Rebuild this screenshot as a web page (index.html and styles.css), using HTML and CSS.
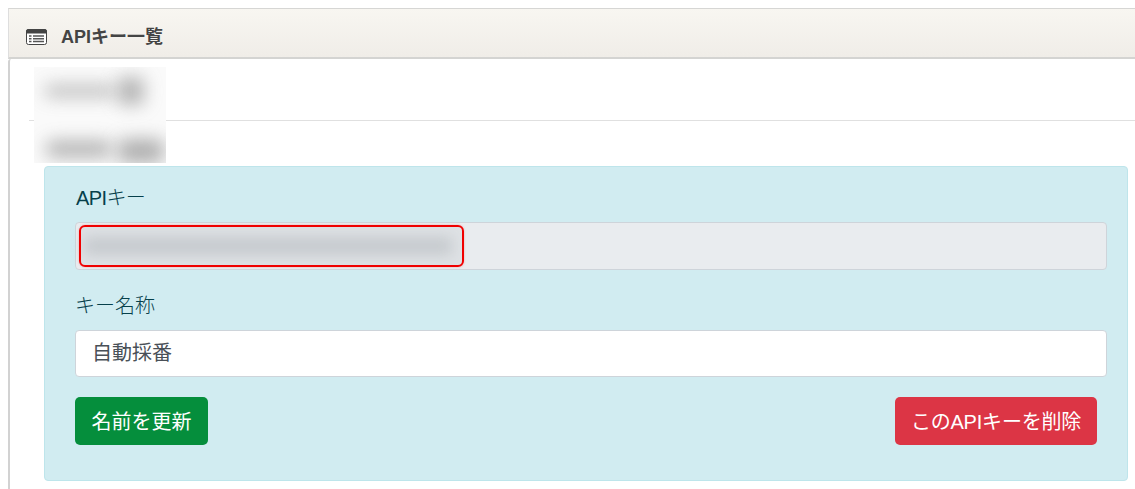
FILE: index.html
```html
<!DOCTYPE html>
<html lang="ja">
<head>
<meta charset="utf-8">
<title>APIキー一覧</title>
<link rel="stylesheet" href="styles.css">
</head>
<body>
<section class="panel">
  <header class="panel-head">
    <svg class="head-icon" width="21" height="16" viewBox="0 0 21 16" aria-hidden="true">
      <rect x="0.5" y="0.5" width="20" height="15" rx="2" fill="#fff" stroke="#444"/>
      <path d="M0 2.5a2.5 2.5 0 0 1 2.5-2.5h16a2.5 2.5 0 0 1 2.5 2.5v2h-21z" fill="#444"/>
      <path d="M3 7h2.5M7 7h11M3 9.75h2.5M7 9.75h11M3 12.5h2.5M7 12.5h11" stroke="#555" stroke-width="1.4"/>
    </svg>
    <h1 class="head-title">APIキー一覧</h1>
  </header>
  <div class="panel-body">
    <div class="masked" aria-hidden="true">
      <span class="smear smear-a"></span><span class="smear smear-b"></span>
      <span class="smear smear-c"></span><span class="smear smear-d"></span>
    </div>
    <div class="row-line"></div>
    <div class="alert">
      <div class="field">
        <label class="label label-key">APIキー</label>
        <div class="input input-readonly">
          <span class="key-smear"></span>
          <span class="key-mark"></span>
        </div>
      </div>
      <div class="field">
        <label class="label">キー名称</label>
        <div class="input input-name">自動採番</div>
      </div>
      <div class="actions">
        <button class="btn btn-green">名前を更新</button>
        <button class="btn btn-red">このAPIキーを削除</button>
      </div>
    </div>
  </div>
</section>
</body>
</html>
```
FILE: styles.css
```css
* { box-sizing: border-box; }
html, body { height: 100%; overflow: hidden; }
body {
  margin: 0;
  padding: 8px 0 0 8px;
  background: #fff;
  color: #212529;
  font-family: "Liberation Sans", "Noto Sans CJK JP", sans-serif;
}
.panel { height: 100%; display: flex; flex-direction: column; }
.panel-head {
  height: 51px;
  display: flex;
  align-items: center;
  padding: 8px 0 0 17px;
  gap: 14px;
  background: linear-gradient(#f8f6f1, #f0ede8);
  border-top: 1px solid #d6d6d4;
  border-left: 1px solid #dedede;
  border-bottom: 2px solid #d4d4d2;
}
.head-icon { flex: none; }
.head-title {
  margin: 0;
  font-size: 18px;
  line-height: 24px;
  font-weight: 700;
  color: #444;
}
.panel-body {
  flex: 1;
  position: relative;
  border-left: 2px solid #d2d2d2;
  border-top-left-radius: 3px;
  padding: 61px 7px 0 34px;
}
.row-line {
  height: 1px;
  margin: 0 -7px 0 -15px;
  background: #e0e0e0;
}
.masked {
  position: absolute;
  left: 24px;
  top: 8px;
  width: 132px;
  height: 96px;
  overflow: hidden;
  background: #fafafa;
}
.smear {
  position: absolute;
  background: #8e8e8e;
  filter: blur(9px);
  border-radius: 6px;
}
.smear-a { left: 10px; top: 18px; width: 72px; height: 12px; opacity: .6; }
.smear-b { left: 84px; top: 10px; width: 26px; height: 28px; opacity: .65; }
.smear-c { left: 12px; top: 74px; width: 66px; height: 16px; opacity: .7; }
.smear-d { left: 84px; top: 72px; width: 46px; height: 24px; opacity: .7; }
.alert {
  margin-top: 45px;
  height: 315px;
  padding: 18px 20px 0 30px;
  background: #d1ecf1;
  border: 1px solid #bee5eb;
  border-radius: 4px;
  color: #06404b;
}
.field { margin-bottom: 23px; }
.label {
  display: block;
  margin-bottom: 10px;
  font-size: 20px;
  font-weight: 300;
  line-height: 27px;
}
.label-key { padding-left: 1px; letter-spacing: -0.6px; }
.input {
  height: 48px;
  padding: 7px 16px;
  font-size: 20px;
  line-height: 30px;
  color: #495057;
  background: #fff;
  border: 1px solid #ced4da;
  border-radius: 4px;
}
.input-name { height: 47px; }
.input-readonly { position: relative; background: #e9ecef; }
.key-smear {
  position: absolute;
  left: 8px;
  top: 14px;
  width: 368px;
  height: 18px;
  background: #c8ccd0;
  filter: blur(7px);
}
.key-mark {
  position: absolute;
  left: 3px;
  top: 2px;
  width: 385px;
  height: 42px;
  border: 2px solid #f00000;
  border-radius: 6px;
  background: rgba(190, 195, 200, .25);
  box-shadow: 0 0 2px rgba(255, 0, 0, .3);
}
.actions {
  display: flex;
  justify-content: space-between;
  margin-top: -3px;
  padding-right: 10px;
}
.btn {
  height: 48px;
  padding: 0 0 2px;
  border: 0;
  border-radius: 5px;
  color: #fff;
  font-family: inherit;
  font-size: 20px;
}
.btn-green { width: 133px; background: #058e3c; }
.btn-red { width: 202px; background: #dc3545; letter-spacing: -0.2px; }
```
